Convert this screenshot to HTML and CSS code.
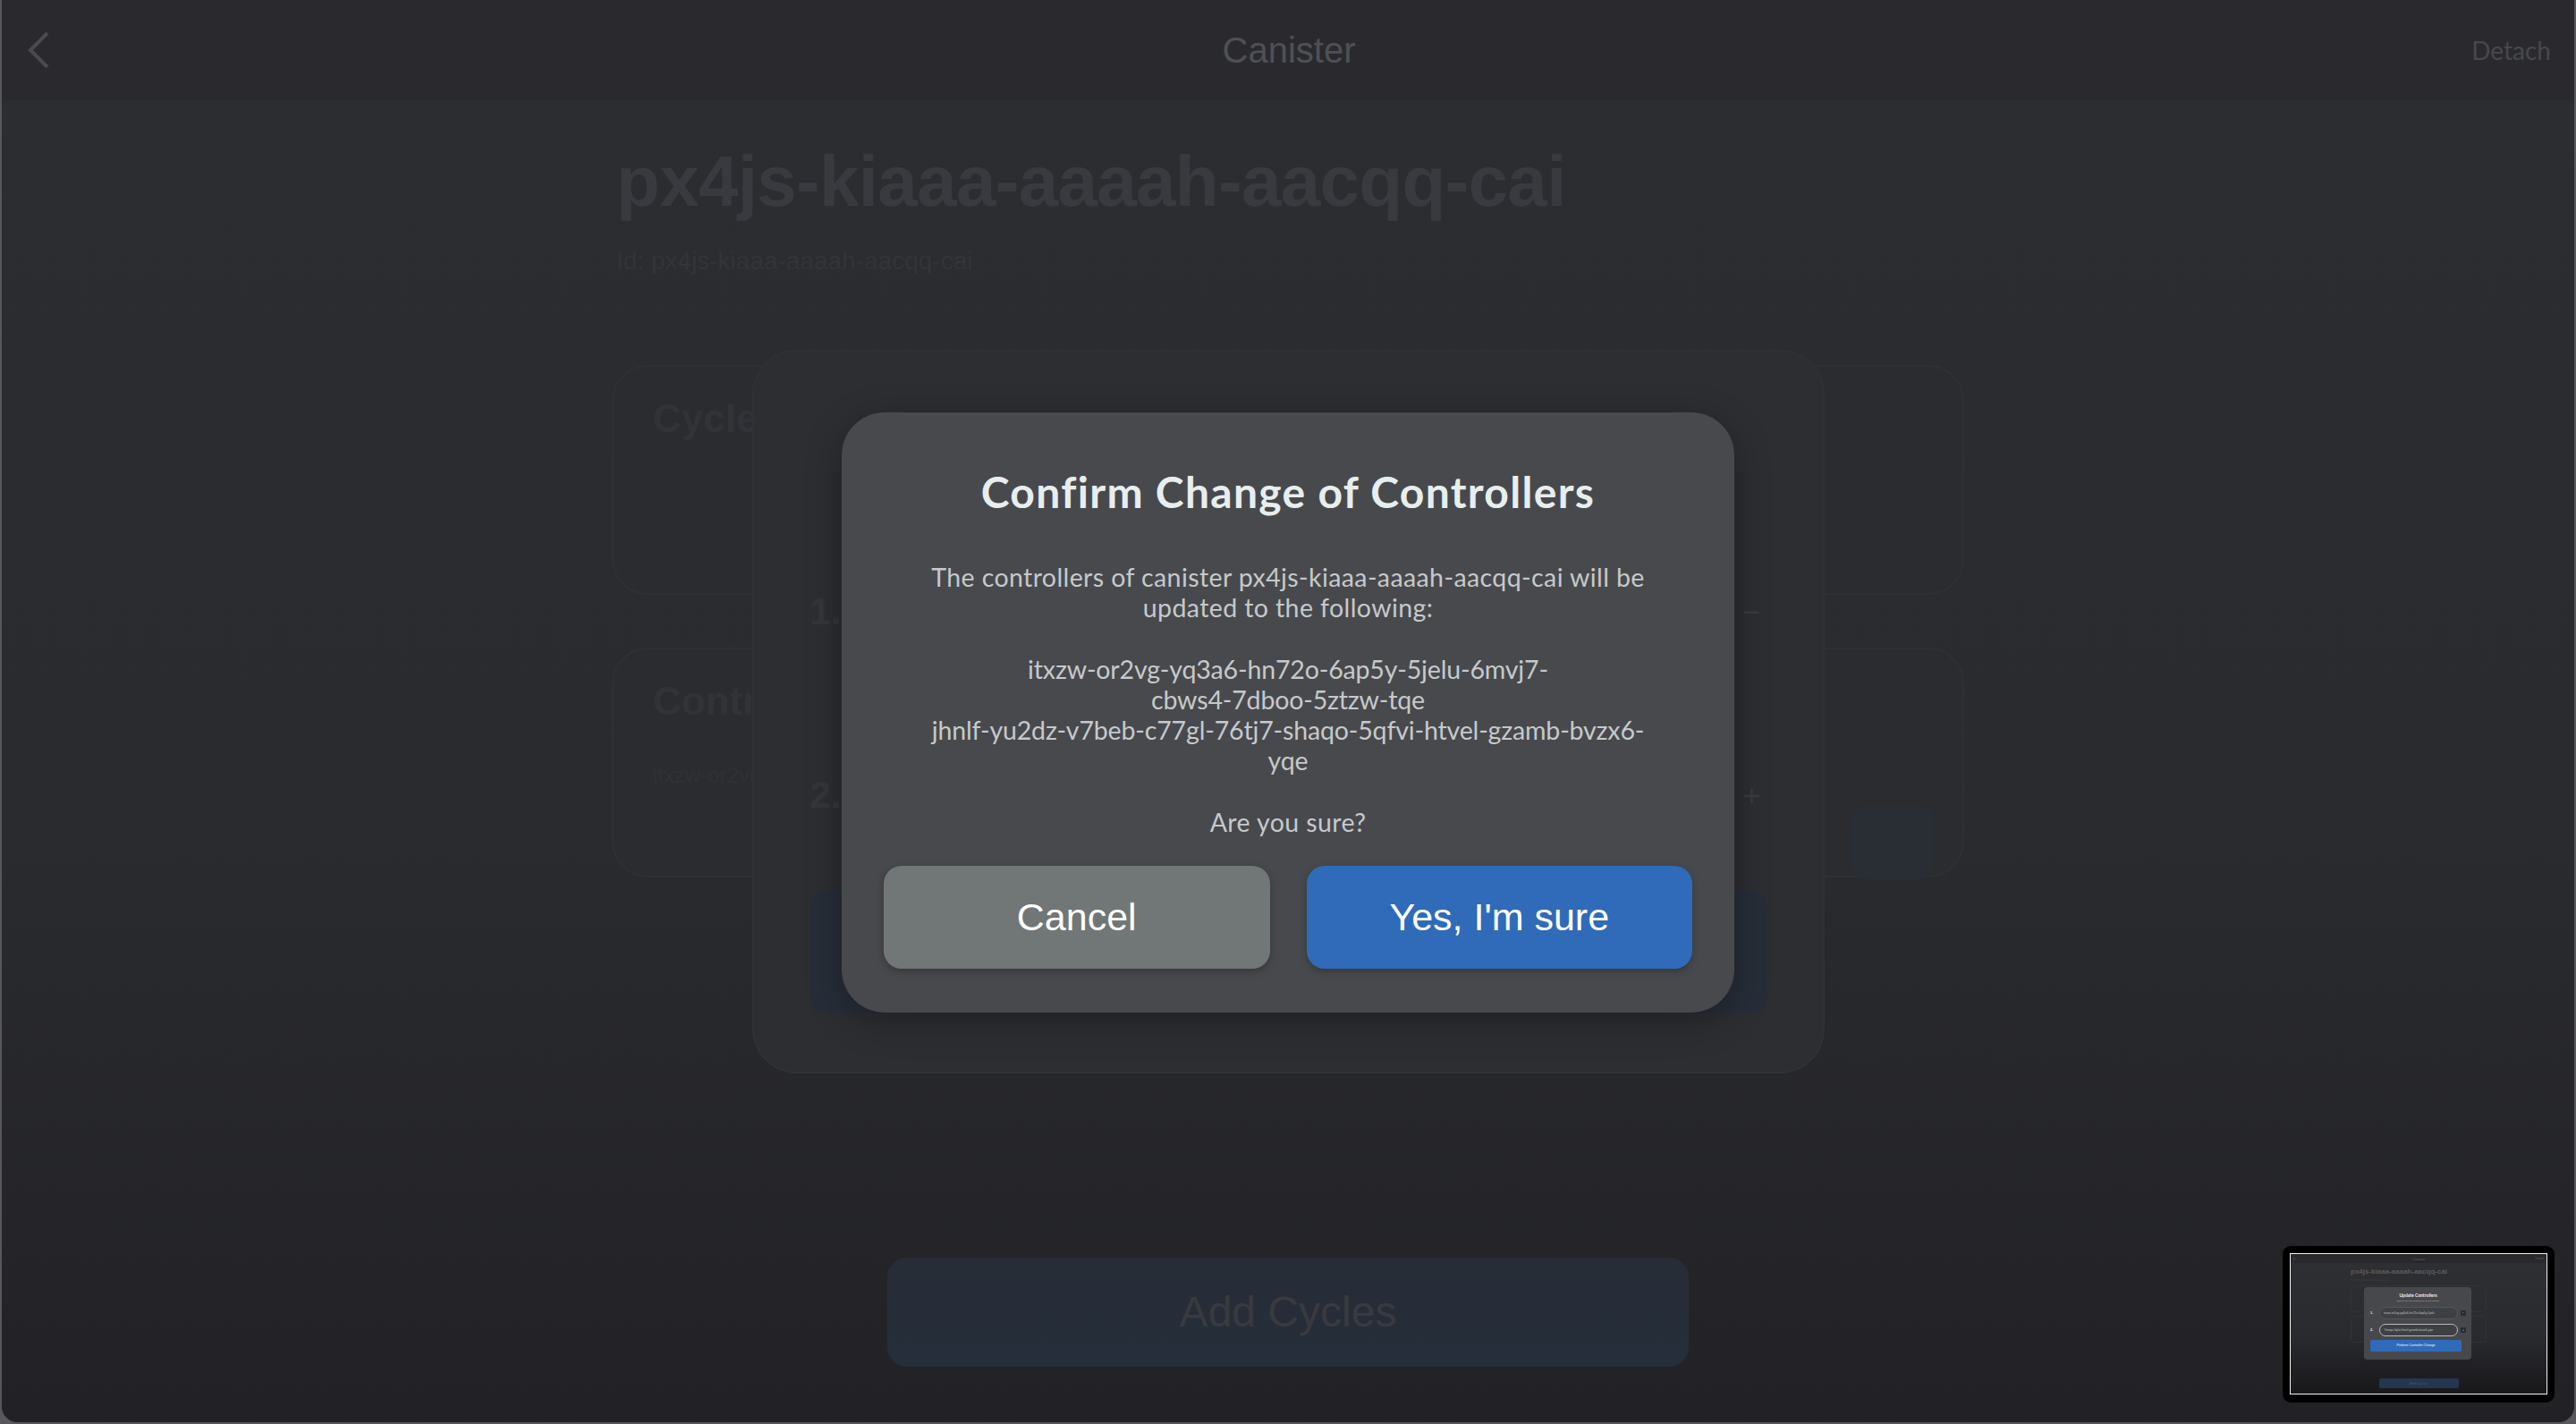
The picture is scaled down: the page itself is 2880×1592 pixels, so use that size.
FILE: index.html
```html
<!DOCTYPE html>
<html lang="en">
<head>
<meta charset="utf-8">
<title>Canister</title>
<link rel="stylesheet" href="styles.css">
</head>
<body>
<div class="app">
  <header class="topbar">
    <button class="back" aria-label="Back">
      <svg viewBox="0 0 26 42" width="26" height="42"><path d="M23 2 L4 21 L23 40" fill="none" stroke="currentColor" stroke-width="4"/></svg>
    </button>
    <h1 class="topbar-title">Canister</h1>
    <span class="detach">Detach</span>
  </header>

  <main class="content">
    <div class="page">
      <h2 class="canister-name">px4js-kiaaa-aaaah-aacqq-cai</h2>
      <p class="canister-id">Id: px4js-kiaaa-aaaah-aacqq-cai</p>

      <section class="card">
        <h3 class="card-title">Cycles</h3>
      </section>

      <section class="card card-controllers">
        <h3 class="card-title">Controllers</h3>
        <div class="card-row">
          <span class="card-principal">itxzw-or2vg</span>
          <span class="card-edit" aria-label="Edit"></span>
        </div>
      </section>
    </div>

    <div class="footer">
      <button class="add-cycles">Add Cycles</button>
    </div>
  </main>

  <div class="backdrop">
    <div class="update-modal">
      <div class="um-row um-row-1"><span class="um-num">1.</span><span class="um-input"></span><span class="um-btn">−</span></div>
      <div class="um-row um-row-2"><span class="um-num">2.</span><span class="um-input"></span><span class="um-btn">+</span></div>
      <button class="um-submit" aria-label="Perform Controller Change"></button>
    </div>
  </div>

  <div class="overlay">
    <div class="confirm" role="dialog">
      <h2 class="confirm-title">Confirm Change of Controllers</h2>
      <div class="confirm-body">
        <p>The controllers of canister px4js-kiaaa-aaaah-aacqq-cai will be updated to the following:</p>
        <div class="principals">
          <div>itxzw-or2vg-yq3a6-hn72o-6ap5y-5jelu-6mvj7-<br>cbws4-7dboo-5ztzw-tqe</div>
          <div>jhnlf-yu2dz-v7beb-c77gl-76tj7-shaqo-5qfvi-htvel-gzamb-bvzx6-<br>yqe</div>
        </div>
        <p>Are you sure?</p>
      </div>
      <div class="actions">
        <button class="btn btn-cancel">Cancel</button>
        <button class="btn btn-confirm">Yes, I'm sure</button>
      </div>
    </div>
  </div>

  <div class="thumb">
    <div class="t-screen">
      <div class="t-top"><span class="t-back">‹</span><span class="t-title">Canister</span><span class="t-detach">Detach</span></div>
      <div class="t-body">
        <div class="t-page">
          <div class="t-name">px4js-kiaaa-aaaah-aacqq-cai</div>
          <div class="t-id">Id: px4js-kiaaa-aaaah-aacqq-cai</div>
          <div class="t-card"></div>
          <div class="t-card"></div>
        </div>
        <div class="t-add">Add Cycles</div>
      </div>
      <div class="t-modal">
        <div class="t-m-title">Update Controllers</div>
        <div class="t-m-sub">Specify the new controller(s) of the canister</div>
        <div class="t-m-row"><span class="t-m-num">1.</span><span class="t-m-input">itxzw-or2vg-yq3a6-hn72o-6ap5y-5jelu</span><span class="t-m-btn">−</span></div>
        <div class="t-m-row"><span class="t-m-num">2.</span><span class="t-m-input t-m-focus">*shaqo-5qfvi-htvel-gzamb-bvzx6-yqe</span><span class="t-m-btn">+</span></div>
        <div class="t-m-submit">Perform Controller Change</div>
      </div>
    </div>
  </div>
</div>
</body>
</html>
```

FILE: styles.css
```css
* { box-sizing: border-box; margin: 0; padding: 0; }

html, body { width: 2880px; height: 1592px; }

body {
  background: #58585b;
  overflow: hidden;
  font-family: "Liberation Sans", Arial, sans-serif;
}

button { border: none; background: none; font: inherit; color: inherit; }

.app {
  position: relative;
  height: 1590px;
  margin: 0 2px;
  border-radius: 0 0 18px 18px;
  overflow: hidden;
  background: #2b2c30;
  display: flex;
  flex-direction: column;
}

/* ---------- top bar ---------- */
.topbar {
  height: 112px;
  flex: none;
  display: grid;
  grid-template-columns: 1fr auto 1fr;
  align-items: center;
  padding: 0 26px 0 28px;
  background: #2a2a2e;
}

.back {
  justify-self: start;
  width: 26px;
  height: 42px;
  color: #4a4a50;
  display: flex;
}

.topbar-title {
  font: 400 40px/1 "Liberation Sans", Arial, sans-serif;
  color: #4f5055;
}

.detach {
  justify-self: end;
  font: 400 28px/1 Lato, sans-serif;
  color: #47484d;
}

/* ---------- page ---------- */
.content {
  flex: 1;
  display: flex;
  flex-direction: column;
  background: linear-gradient(#2c2d31 0%, #2a2b2f 55%, #222226 100%);
}

.page {
  width: 1512px;
  margin: 0 auto;
  padding-top: 51px;
}

.canister-name {
  padding-left: 5px;
  font: 700 80px/80px "Liberation Sans", Arial, sans-serif;
  letter-spacing: -0.7px;
  color: #393a3f;
}

.canister-id {
  margin-top: 35px;
  padding-left: 5px;
  font: 400 28px/28px "Liberation Sans", Arial, sans-serif;
  color: #333439;
}

.card {
  height: 257px;
  margin-top: 102px;
  padding: 36px 32px 0 44px;
  border: 2px solid #2f3035;
  border-radius: 40px;
  background: #2b2c30;
}

.card-controllers { margin-top: 59px; }

.card-title {
  font: 700 44px/44px "Liberation Sans", Arial, sans-serif;
  color: #323338;
}

.card-row {
  margin-top: 49px;
  display: flex;
  align-items: flex-start;
  justify-content: space-between;
}

.card-principal {
  font: 400 24px/1 "Liberation Sans", Arial, sans-serif;
  color: #303136;
}

.card-edit {
  width: 92px;
  height: 83px;
  margin-top: 45px;
  border-radius: 16px;
  background: #292d34;
}

.footer {
  margin-top: auto;
  padding-bottom: 62px;
  display: flex;
  justify-content: center;
}

.add-cycles {
  width: 896px;
  height: 122px;
  border-radius: 22px;
  background: linear-gradient(#272c36, #252e3b);
  font: 400 48px/1 "Liberation Sans", Arial, sans-serif;
  color: #393a3f;
}

/* ---------- background modal ---------- */
.backdrop {
  position: absolute;
  inset: 0;
  display: flex;
  align-items: center;
  justify-content: center;
}

.update-modal {
  width: 1199px;
  height: 809px;
  padding: 0 62px 65px 63px;
  border: 2px solid #303136;
  border-radius: 50px;
  background: #2d2e32;
  display: flex;
  flex-direction: column;
  justify-content: flex-end;
}

.um-row {
  height: 110px;
  display: flex;
  align-items: center;
  gap: 24px;
}

.um-row-1 { margin-bottom: 95px; }
.um-row-2 { margin-bottom: 51px; }

.um-num {
  width: 40px;
  font: 700 42px/1 "Liberation Sans", Arial, sans-serif;
  color: #35363b;
}

.um-input {
  flex: 1;
  height: 96px;
  border-radius: 48px;
  border: 2px solid #33343a;
}

.um-btn {
  width: 34px;
  text-align: center;
  font: 400 34px/1 "Liberation Sans", Arial, sans-serif;
  color: #3a3b40;
}

.um-submit {
  height: 138px;
  border-radius: 20px;
  background: #272d38;
}

/* ---------- confirm dialog ---------- */
.overlay {
  position: absolute;
  inset: 0;
  display: flex;
  align-items: center;
  justify-content: center;
}

.confirm {
  width: 998px;
  margin-top: 3px;
  padding: 61px 47px 49px 47px;
  border-radius: 48px;
  background: #48494d;
  box-shadow: 0 10px 40px rgba(0, 0, 0, 0.3);
  display: flex;
  flex-direction: column;
  align-items: center;
  text-align: center;
  font-family: Lato, "Open Sans", sans-serif;
}

.confirm-title {
  font: 700 48px/55px Lato, sans-serif;
  letter-spacing: 1.3px;
  color: #e7eeee;
}

.confirm-body {
  width: 830px;
  margin-top: 51px;
  font: 400 28.5px/34px Lato, sans-serif;
  letter-spacing: 0.4px;
  color: #c6c9cb;
}

.principals {
  margin: 35px 0;
  letter-spacing: -0.15px;
}

.actions {
  width: 100%;
  margin-top: 32px;
  display: grid;
  grid-template-columns: 1fr 1fr;
  gap: 41px;
}

.btn {
  height: 115px;
  border-radius: 20px;
  font: 400 43px/1 "Liberation Sans", Arial, sans-serif;
  color: #ffffff;
  box-shadow: 0 3px 8px rgba(0, 0, 0, 0.25);
}

.btn-cancel { background: #717676; }
.btn-confirm { background: #2f6bb9; }

/* ---------- thumbnail ---------- */
.thumb {
  position: absolute;
  right: 22px;
  bottom: 22px;
  width: 304px;
  height: 175px;
  padding: 8px 8px 9px 8px;
  border-radius: 9px;
  background: #000;
}

.t-screen {
  position: relative;
  width: 288px;
  height: 158px;
  border: 1px solid #f2f2f2;
  overflow: hidden;
  display: flex;
  flex-direction: column;
  font-family: "Liberation Sans", Arial, sans-serif;
}

.t-top {
  height: 10px;
  flex: none;
  display: grid;
  grid-template-columns: 1fr auto 1fr;
  align-items: center;
  padding: 0 3px;
  background: #29292d;
  font-size: 4px;
  color: #5c5d62;
}

.t-back { font-size: 7px; line-height: 1; }
.t-detach { justify-self: end; font-size: 3px; }

.t-body {
  flex: 1;
  display: flex;
  flex-direction: column;
  background: linear-gradient(#2e2f33 0%, #2a2b2f 55%, #18181b 100%);
}

.t-page {
  width: 152px;
  margin: 0 auto;
  padding-top: 5px;
}

.t-name {
  font: 700 8px/10px "Liberation Sans", Arial, sans-serif;
  color: #595a5f;
}

.t-id {
  margin-top: 2px;
  font: 400 3px/4px "Liberation Sans", Arial, sans-serif;
  color: #3d3e43;
}

.t-card {
  height: 30px;
  margin-top: 4px;
  border-radius: 4px;
  border: 1px solid #323338;
}

.t-add {
  margin: auto auto 6px;
  width: 89px;
  height: 11px;
  border-radius: 2px;
  background: #263650;
  font: 400 4px/11px "Liberation Sans", Arial, sans-serif;
  text-align: center;
  color: #4a5670;
}

.t-modal {
  position: absolute;
  left: 82px;
  top: 37px;
  width: 120px;
  height: 81px;
  padding: 6px 6px 0 7px;
  border-radius: 4px;
  background: #47484c;
  display: flex;
  flex-direction: column;
  align-items: stretch;
}

.t-m-title {
  text-align: center;
  font: 700 5px/6px Lato, sans-serif;
  color: #f0f0f0;
}

.t-m-sub {
  margin-top: 2px;
  text-align: center;
  font: 400 2.5px/3px Lato, sans-serif;
  color: #b8b8b8;
}

.t-m-row {
  margin-top: 4px;
  height: 15px;
  display: flex;
  align-items: center;
  gap: 3px;
}

.t-m-num {
  width: 7px;
  font: 700 4px/1 "Liberation Sans", Arial, sans-serif;
  color: #e6e6e6;
}

.t-m-input {
  flex: 1;
  height: 14px;
  padding: 0 4px;
  border-radius: 7px;
  border: 1px solid #55565b;
  background: #3f4044;
  overflow: hidden;
  white-space: nowrap;
  font: 400 3.4px/12px "Liberation Sans", Arial, sans-serif;
  color: #c0c0c0;
}

.t-m-focus { border-color: #b9babd; }

.t-m-btn {
  width: 6px;
  height: 6px;
  border-radius: 1px;
  background: #2b2c30;
  font: 400 4px/6px "Liberation Sans", Arial, sans-serif;
  text-align: center;
  color: #d0d0d0;
}

.t-m-submit {
  margin-top: 4px;
  height: 13px;
  margin-right: 5px;
  border-radius: 2px;
  background: #2f6bb9;
  font: 400 3.6px/13px "Liberation Sans", Arial, sans-serif;
  text-align: center;
  color: #ffffff;
}
```
